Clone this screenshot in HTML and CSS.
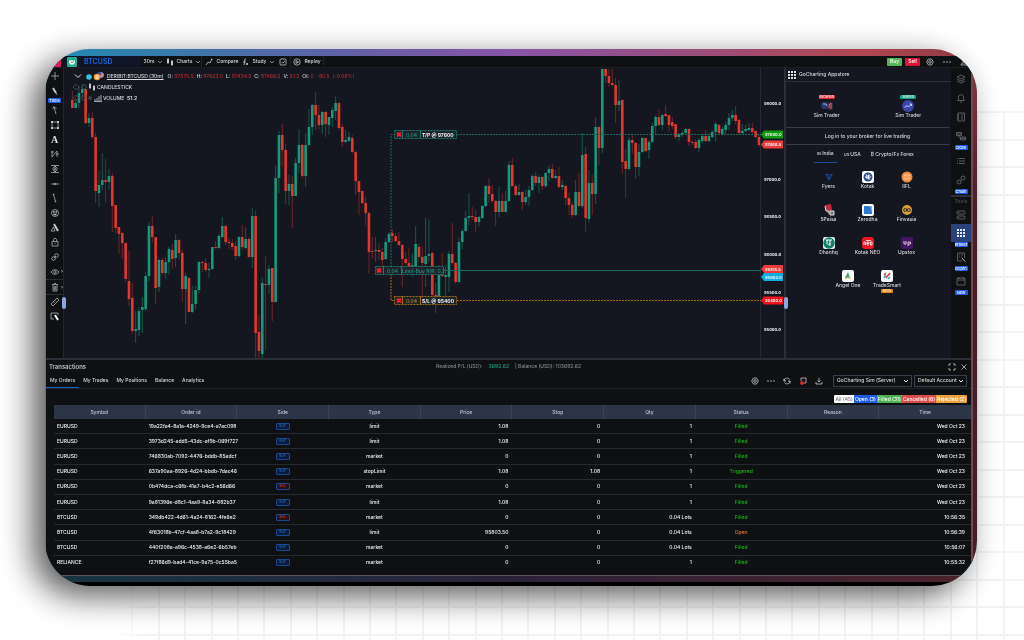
FILE: index.html
```html
<!DOCTYPE html>
<html lang="en">
<head>
<meta charset="utf-8">
<title>GoCharting – BTCUSD</title>
<link rel="stylesheet" href="styles.css">
</head>
<body>
<div class="paper-grid"></div>
<main class="frame">
<div class="app">

<header class="topbar">
  <span class="avatar"></span>
  <div class="symbol-box">
    <svg class="logo" viewBox="0 0 10 10"><rect width="10" height="10" rx="1" fill="#1fae8e"/><path d="M2 3.5h6v2.5L6.5 7.5h-3L2 6z" fill="#fff"/><path d="M4 5l1 1 2-2" stroke="#1fae8e" fill="none"/></svg>
    <button class="symbol">BTCUSD</button>
  </div>
  <button class="tb interval">30m <svg class="chev" viewBox="0 0 6 6"><path d="M1 2l2 2 2-2"/></svg></button>
  <button class="tb charts"><svg class="ic" viewBox="0 0 8 8"><path d="M2 0v6M6 2v6" /><path d="M2 1v4M6 3v4" stroke-width="2"/></svg>Charts <svg class="chev" viewBox="0 0 6 6"><path d="M1 2l2 2 2-2"/></svg></button>
  <button class="tb compare"><svg class="ic" viewBox="0 0 8 8"><path d="M1 7l2-3 2 1 2-4M6 1h1v1"/></svg>Compare</button>
  <button class="tb study"><svg class="ic" viewBox="0 0 8 8"><path d="M4 1H3L2 7M1 4h3M4 5l2 2M6 5L4 7"/></svg>Study <svg class="chev" viewBox="0 0 6 6"><path d="M1 2l2 2 2-2"/></svg></button>
  <button class="tb snap" aria-label="Layout"><svg class="ic" viewBox="0 0 8 8"><rect x="1" y="1" width="6" height="6" rx="1"/><path d="M2.5 4l1.2 1.2L6 3"/></svg></button>
  <button class="tb replay"><svg class="ic" viewBox="0 0 8 8"><circle cx="4" cy="4" r="3.2"/><path d="M3 2.5L5.5 4 3 5.5z"/></svg>Replay</button>
  <div class="topbar-right">
    <button class="trade buy">Buy</button>
    <button class="trade sell">Sell</button>
    <button class="tool" aria-label="Settings"><svg class="ic" viewBox="0 0 8 8"><path d="M2.5 1h3L7.4 4 5.500 7h-3L.6 4z"/><circle cx="4" cy="4" r="1.3"/></svg></button>
    <button class="tool" aria-label="More"><svg class="ic" viewBox="0 0 8 8"><path d="M0 4h2M3 4h2M6 4h2"/></svg></button>
    <button class="tool" aria-label="Account"><svg class="ic" viewBox="0 0 8 8"><circle cx="4" cy="2.500" r="1.500"/><path d="M1 7c0-3 6-3 6 0z"/></svg></button>
  </div>
</header>

<section class="workspace">
  <nav class="tools-left">
    <button class="cross" aria-label="Crosshair"><svg viewBox="0 0 10 10"><path d="M5 1v8M1 5h8"/></svg></button>
    <button aria-label="Pen"><svg viewBox="0 0 10 10"><path d="M3 2l3 5" stroke-width="2"/><path d="M6 7l1 2"/></svg></button>
    <span class="tag">Tools</span>
    <div class="tool-stack">
      <button aria-label="Arrow"><svg viewBox="0 0 10 10"><path d="M6 9L4 2M2.500 4L4 1.500 6.500 4"/></svg></button>
      <button aria-label="Rectangle"><svg viewBox="0 0 10 10"><rect x="2" y="2" width="6" height="6"/><path d="M1 2h2M7 2h2M1 8h2M7 8h2" stroke-width="2"/></svg></button>
      <button class="letter" aria-label="Text">A</button>
      <button aria-label="Patterns"><svg viewBox="0 0 10 10"><path d="M2 2v6l5-6v6M1 3h3M6 5h3"/></svg></button>
      <button aria-label="Fibonacci"><svg viewBox="0 0 10 10"><path d="M1 1.500h8M1 8.500h8M5 2v6M3 4l2-2 2 2M3 6l2 2 2-2M2 5h6"/></svg></button>
      <button aria-label="Horizontal line"><svg viewBox="0 0 10 10"><path d="M1 5h8"/><circle cx="5" cy="5" r=".8"/></svg></button>
      <button aria-label="Trend line"><svg viewBox="0 0 10 10"><path d="M3.500 1.500l2 7"/><circle cx="3.500" cy="1.500" r=".5"/><circle cx="5.500" cy="8.500" r=".5"/></svg></button>
      <button aria-label="Emoji"><svg viewBox="0 0 10 10"><circle cx="5" cy="5" r="3.500"/><path d="M3 4h1.500M5.500 4H7M3.500 6.500h3" stroke-width="1.300"/></svg></button>
      <button aria-label="Shapes"><svg viewBox="0 0 10 10"><path d="M4 1l4 7" stroke-width="2"/><path d="M1 8l2.500-4L5 8z"/></svg></button>
      <button aria-label="Lock"><svg viewBox="0 0 10 10"><path d="M2 4.500h6V9H2zM3.500 4V2.500C3.500 1 6.500 1 6.500 2.500V4M5 6v1"/></svg></button>
      <button aria-label="Link"><svg viewBox="0 0 10 10"><circle cx="3.500" cy="6.500" r="1.800"/><circle cx="6.500" cy="3.500" r="1.800"/><path d="M4 6l2-2"/></svg></button>
      <button class="more" aria-label="Visibility"><svg viewBox="0 0 10 10"><path d="M1 5c2-3 6-3 8 0-2 3-6 3-8 0z"/><circle cx="5" cy="5" r="1.200"/></svg></button>
    </div>
    <button class="lined more" aria-label="Delete"><svg viewBox="0 0 10 10"><path d="M2 2.500h6M3 3v6h4V3M4 1.500h2M4.300 4v4M5.700 4v4"/></svg></button>
    <button aria-label="Measure"><svg viewBox="0 0 10 10"><path d="M1 7l6-6 2 2-6 6zM3.500 5l1 1M5 3.500l1 1"/></svg></button>
    <button aria-label="Object select"><svg viewBox="0 0 10 10"><path d="M4 8H1V2h7v2"/><path d="M5 4l3 5" stroke="#fff" stroke-width="2"/></svg></button>
    <span class="grip"></span>
  </nav>

  <div class="chart">
    <svg class="plot" viewBox="64 68 720 290" role="img" aria-label="BTCUSD 30 minute candles">
      <g id="candles"></g>
      <path d="M760.5 68v290" stroke="#262a33"/>
      <g fill="none">
        <path d="M391 270V134.500h3M457 134.500h304" stroke="#1c6a60" stroke-dasharray="2 1"/>
        <path d="M443 270.500h318" stroke="#1c6a60"/>
        <path d="M391 274v26.500h3M457 300.500h304" stroke="#a06c12" stroke-dasharray="2 1"/>
      </g>
      <g class="order tp"><rect x="394.500" y="130.500" width="62" height="8"/><path d="M402.500 130v9M420.500 130v9"/><path class="x" d="M397 132.500l4 4m0-4l-4 4"/><text x="406" y="136.500">0.04</text><text class="b" x="422" y="136.500">T/P @ 97600</text></g>
      <g class="order lim"><rect x="375.500" y="266.500" width="68" height="8"/><path d="M383.500 266v9M401.500 266v9"/><path class="x" d="M377 268.500l4 4m0-4l-4 4"/><text x="387" y="272.500">0.04</text><text x="402" y="272.500">Limit-Buy R/R: 0.2</text></g>
      <g class="order sl"><rect x="394.500" y="296.500" width="62" height="8"/><path d="M402.500 296v9M420.500 296v9"/><path class="x" d="M397 298.500l4 4m0-4l-4 4"/><text x="406" y="302.500">0.04</text><text class="b" x="422" y="302.500">S/L @ 95400</text></g>
      <g class="axis">
        <text x="764" y="105">98000.0</text><text x="764" y="181">97000.0</text><text x="764" y="218">96500.0</text><text x="764" y="256">96000.0</text><text x="764" y="294">95500.0</text><text x="764" y="331">95000.0</text>
        <path d="M761 134.500l3-4h19v8h-19z" fill="#0d9b10"/><text x="765" y="136">97600.0</text>
        <path d="M761 144.500l3-4h19v8h-19z" fill="#ea3b38"/><text x="765" y="146">97466.5</text>
        <path d="M761 269l3-4h19v8h-19z" fill="#ea3b38"/><text x="765" y="270.500">95815.5</text>
        <path d="M761 277l3-4h19v8h-19z" fill="#10aee0"/><text x="765" y="278.500">95803.5</text>
        <path d="M761 300.500l3-4h19v8h-19z" fill="#f5121a"/><text x="765" y="302">95400.0</text>
      </g>
    </svg>
    <div class="legend">
      <div class="legend-row">
        <svg class="fold" viewBox="0 0 10 10"><path d="M2 3.500l3 3 3-3" stroke="#ddd" fill="none"/></svg>
        <svg class="coins" viewBox="0 0 18 10"><circle cx="3" cy="6" r="2.800" fill="#2fc4dc"/><circle cx="15" cy="4" r="2.800" fill="#c6cbe0"/><path d="M12.500 3h5M12.500 5h5" stroke="#c33f4b"/><path d="M12 1h3v3h-3z" fill="#364a92"/><circle cx="11" cy="6" r="3.300" fill="#f5952a"/><path d="M10 4.500h2v3h-2zM10 6h2" stroke="#fff" fill="none" stroke-width=".7"/></svg>
        <a href="#" class="pair">DERIBIT:BTCUSD (30m)</a>
        <span class="ohlc"><span>O: <b>97570.5</b></span><span>H: <b>97623.0</b></span><span>L: <b>97434.5</b></span><span>C: <b>97466.5</b></span><span>V: <b>51.2</b></span><span>OI: <b>0</b></span><b>-80.5</b><b>(-0.08%)</b></span>
      </div>
      <div class="legend-row">
        <svg class="dim" viewBox="0 0 14 8"><path d="M0 4c2-3 4-3 6 0-2 3-4 3-6 0z"/><circle cx="11" cy="4" r="2.200"/></svg>
        <svg class="ic" viewBox="0 0 8 8"><path d="M2 0v6M6 2v6"/><path d="M2 1v4M6 3v4" stroke-width="2"/></svg>
        <span>CANDLESTICK</span>
      </div>
      <div class="legend-row">
        <svg class="dim wide" viewBox="0 0 20 8"><path d="M0 4c2-3 4-3 6 0-2 3-4 3-6 0z"/><circle cx="11" cy="4" r="2.200"/><path d="M15 5l2-3v4l2-3"/></svg>
        <svg class="ic" viewBox="0 0 8 8"><path d="M1 7V5M3 7V4M5 7V2M7 7V1M0 7.500h8"/></svg>
        <span>VOLUME &nbsp;<b>51.2</b></span>
      </div>
    </div>
  </div>

  <aside class="panel">
    <span class="grip"></span>
    <h2 class="panel-title"><svg viewBox="0 0 8 8"><path d="M0 1h2M3 1h2M6 1h2M0 4h2M3 4h2M6 4h2M0 7h2M3 7h2M6 7h2" stroke="#ddd" stroke-width="2"/></svg>GoCharting Appstore</h2>
    <div class="sims">
      <a href="#" class="sim"><span class="flag red">BROWSER</span><svg viewBox="0 0 12 12"><rect y="2" width="7" height="7" rx="3" fill="#263a6c"/><rect x="6" y="2" width="6" height="8" rx="2" fill="#342a3c"/><path d="M2 4h3l1 2" stroke="#8fb3e6" fill="none"/><path d="M8 8V5l2-2v6" stroke="#e86474" fill="none"/></svg>Sim Trader</a>
      <a href="#" class="sim"><span class="flag teal">SERVER</span><svg viewBox="0 0 12 12"><circle cx="6" cy="6" r="6" fill="#3a46a5"/><path d="M2.500 7.500l2.500-2 1.500 1.500 3-3M7.500 4h2v2" stroke="#c6d2ff" fill="none"/></svg>Sim Trader</a>
    </div>
    <p class="login">Log in to your broker for live trading</p>
    <nav class="regions">
      <button class="on"><small>IN</small> India</button><button><small>US</small> USA</button><button>₿ Crypto/Fx Forex</button>
    </nav>
    <div class="brokers">
      <a href="#"><svg viewBox="0 0 12 12"><path d="M2 3h3l1 1 1-1h3L6 10z" fill="#17448e"/><path d="M4 5h4" stroke="#11161f"/></svg>Fyers</a>
      <a href="#"><svg viewBox="0 0 12 12"><rect width="12" height="12" rx="2" fill="#fff"/><circle cx="6" cy="6" r="4.500" fill="#2a4f94"/><path d="M3 6h6M4 4h1v4M8 4H6.500v4H8" stroke="#fff" fill="none"/></svg>Kotak</a>
      <a href="#"><svg viewBox="0 0 12 12"><circle cx="6" cy="6" r="5.500" fill="#f08a3c"/><circle cx="6" cy="6" r="3.500" fill="#f9b878"/><path d="M6 2v8M2 6h8" stroke="#f08a3c" stroke-width=".6"/></svg>IIFL</a>
      <a href="#"><svg viewBox="0 0 12 12"><path d="M2 1l6-1 1 6-5 3z" fill="#c72441"/><path d="M2 2l1 5h3v3M7 7h4v4H7z" stroke="#ddd" fill="#777"/></svg>5Paisa</a>
      <a href="#"><svg viewBox="0 0 12 12"><rect width="12" height="12" rx="2" fill="#fff"/><path d="M2 2h5c2 0 3 3 3 8H2z" fill="#2f78d4"/><path d="M7 2l3 3V2z" fill="#75a8e8"/></svg>Zerodha</a>
      <a href="#"><svg viewBox="0 0 12 12"><circle cx="6" cy="6" r="5" fill="#dba03c"/><circle cx="4.200" cy="6" r="1.500" fill="none" stroke="#2c2b27"/><circle cx="7.800" cy="6" r="1.500" fill="none" stroke="#2c2b27"/></svg>Finvasia</a>
      <a href="#"><svg viewBox="0 0 12 12"><rect width="12" height="12" rx="2" fill="#e8f3ef"/><circle cx="6" cy="6" r="5.700" fill="#128067"/><path d="M4 3v3c0 2 3 2 3 0M7 3v6M3 3h6" stroke="#fff" fill="none"/></svg>Dhanhq</a>
      <a href="#"><svg viewBox="0 0 12 12"><rect width="12" height="12" rx="3" fill="#ee1721"/><path d="M2 8V5h1.500v3M5 6.500h2V5H5v3h2M8.500 5H10v3H8.500zM4 3.500h5" stroke="#fff" stroke-width=".8" fill="none"/></svg>Kotak NEO</a>
      <a href="#"><svg viewBox="0 0 12 12"><rect width="12" height="12" rx="2" fill="#44165f"/><path d="M3 4v3h2V4M7 9V5h2.500v2H7" stroke="#d9c7e6" fill="none"/></svg>Upstox</a>
    </div>
    <div class="brokers pair-row">
      <a href="#"><svg viewBox="0 0 12 12"><rect width="12" height="12" rx="2" fill="#fff"/><path d="M6 2l2 6H3z" fill="#39a56b"/><path d="M3 9l3-2 3 2" stroke="#ee9c4b" fill="none"/></svg>Angel One</a>
      <a href="#"><svg viewBox="0 0 12 12"><rect width="12" height="12" rx="2" fill="#fff"/><path d="M3 5l2-2M5 8l4-5" stroke="#d83b46" stroke-width="1.500"/><path d="M3 8l2-3M7 9l2-2" stroke="#2fa4c9" stroke-width="1.500"/></svg>TradeSmart<span class="flag orange">BETA</span></a>
    </div>
  </aside>

  <nav class="rail">
    <button aria-label="Layers"><svg viewBox="0 0 10 10"><path d="M1 3l4-2 4 2-4 2zM1 5l4 2 4-2M1 7l4 2 4-2"/></svg></button>
    <button aria-label="Alerts"><svg viewBox="0 0 10 10"><path d="M1.500 7.500h7L7.500 6V4c0-3-5-3-5 0v2zM4 9h2"/></svg></button>
    <button aria-label="Watchlist"><svg viewBox="0 0 10 10"><path d="M2 1h6.500v8H2zM1 3h2M1 5h2M1 7h2M5 3h2M5 5h2M5 7h2"/></svg></button>
    <button aria-label="Order book"><svg viewBox="0 0 10 10"><path d="M.5 1.500h5v3h-5zM.5 3h5M4.500 6h5v3h-5zM4.500 7.500h5M3 5v2"/></svg></button>
    <span class="tag">DOM</span>
    <button aria-label="List"><svg viewBox="0 0 10 10"><path d="M1 2.500h1M3 2.500h6M1 5h1M3 5h6M1 7.500h1M3 7.500h6"/></svg></button>
    <button aria-label="Option chain"><svg viewBox="0 0 10 10"><circle cx="3" cy="7" r="2"/><circle cx="7" cy="3" r="2"/><path d="M4 6l2-2"/></svg></button>
    <span class="tag">Chain</span>
    <span class="rail-label">Tools</span>
    <button aria-label="Panels"><svg viewBox="0 0 10 10"><rect x="1" y="1" width="8" height="3" rx="1"/><rect x="1" y="6" width="8" height="3" rx="1"/><path d="M2.500 2.500h1M2.500 7.500h1"/></svg></button>
    <button class="on" aria-label="Appstore"><svg viewBox="0 0 10 10"><path d="M1 2h2M4 2h2M7 2h2M1 5h2M4 5h2M7 5h2M1 8h2M4 8h2M7 8h2" stroke-width="2"/></svg></button>
    <span class="tag">Broker</span>
    <button aria-label="Reports"><svg viewBox="0 0 10 10"><path d="M6 9H1.500V1h7v5M3 3h1M5 3h2M3 5h1M5 5h1"/><path d="M6 6l3 3.500" stroke="#ccc"/></svg></button>
    <span class="tag">Depth</span>
    <button aria-label="Calendar"><svg viewBox="0 0 10 10"><path d="M1 2h8v7H1zM1 4h8M3 1v2M7 1v2"/></svg></button>
    <span class="tag">New</span>
  </nav>
</section>

<section class="transactions">
  <div class="tx-head">
    <h2>Transactions</h2>
    <p class="pnl"><span>Realized P/L (USD):</span><b>3692.62</b><span>| Balance (USD): 103692.62</span></p>
    <div class="win">
      <button aria-label="Expand"><svg class="ic" viewBox="0 0 8 8"><path d="M1 3V1h2M5 1h2v2M7 5v2H5M3 7H1V5"/></svg></button>
      <button aria-label="Close"><svg class="ic" viewBox="0 0 8 8"><path d="M1.500 1.500l5 5m0-5l-5 5"/></svg></button>
    </div>
  </div>
  <div class="tx-bar">
    <nav class="tx-tabs"><button class="on">My Orders</button><button>My Trades</button><button>My Positions</button><button>Balance</button><button>Analytics</button></nav>
    <div class="tx-tools">
      <button aria-label="Settings"><svg class="ic" viewBox="0 0 8 8"><path d="M2.500 1h3L7.400 4 5.500 7h-3L.6 4z"/><circle cx="4" cy="4" r="1.300"/></svg></button>
      <button aria-label="More"><svg class="ic" viewBox="0 0 8 8"><path d="M0 4h2M3 4h2M6 4h2"/></svg></button>
      <button aria-label="Refresh"><svg class="ic" viewBox="0 0 8 8"><path d="M1 4c0-3 4-4 5.500-1.500M1 1.500V4h2M7 4c0 3-4 4-5.500 1.500M7 6.500V4H5"/></svg></button>
      <button aria-label="Close all"><svg class="ic" viewBox="0 0 8 8"><path d="M2 4V1h5v5H5"/><circle cx="3" cy="6" r="1.500" fill="#e4262d" stroke="#e4262d"/></svg></button>
      <button aria-label="Download"><svg class="ic" viewBox="0 0 8 8"><path d="M4 1v4M2.500 3.500L4 5l1.500-1.500M1 5v2h6V5"/></svg></button>
      <label class="pick server"><select aria-label="Broker"><option>GoCharting Sim (Server)</option></select><svg class="chev" viewBox="0 0 6 6"><path d="M1 2l2 2 2-2"/></svg></label>
      <label class="pick account"><select aria-label="Account"><option>Default Account</option></select><svg class="chev" viewBox="0 0 6 6"><path d="M1 2l2 2 2-2"/></svg></label>
    </div>
  </div>
  <div class="filters"><button class="f-all">All (45)</button><button class="f-open">Open (3)</button><button class="f-filled">Filled (31)</button><button class="f-cancel">Cancelled (6)</button><button class="f-reject">Rejected (2)</button></div>
  <div class="table-wrap">
  <table>
    <thead><tr><th>Symbol</th><th>Order id</th><th>Side</th><th>Type</th><th>Price</th><th>Stop</th><th>Qty</th><th>Status</th><th>Reason</th><th>Time</th></tr></thead>
    <tbody>
      <tr><td>EURUSD</td><td>19a22fa4-8a1a-4249-9ce4-a7ac098</td><td><i class="buy">BUY</i></td><td>limit</td><td>1.08</td><td>0</td><td>1</td><td class="ok">Filled</td><td></td><td>Wed Oct 23</td></tr>
      <tr><td>EURUSD</td><td>3973d245-add5-43dc-af9b-069f727</td><td><i class="buy">BUY</i></td><td>limit</td><td>1.08</td><td>0</td><td>1</td><td class="ok">Filled</td><td></td><td>Wed Oct 23</td></tr>
      <tr><td>EURUSD</td><td>746830ab-7092-4476-bddb-85adcf</td><td><i class="buy">BUY</i></td><td>market</td><td>0</td><td>0</td><td>1</td><td class="ok">Filled</td><td></td><td>Wed Oct 23</td></tr>
      <tr><td>EURUSD</td><td>637a90aa-8926-4d24-bbdb-7dac46</td><td><i class="buy">BUY</i></td><td>stopLimit</td><td>1.08</td><td>1.08</td><td>1</td><td class="ok">Triggered</td><td></td><td>Wed Oct 23</td></tr>
      <tr><td>EURUSD</td><td>0b474dca-c6fb-41a7-b4c2-e56d66</td><td><i class="sell">SELL</i></td><td>market</td><td>0</td><td>0</td><td>1</td><td class="ok">Filled</td><td></td><td>Wed Oct 23</td></tr>
      <tr><td>EURUSD</td><td>9a81396e-d8c1-4aa9-8a34-882b37</td><td><i class="buy">BUY</i></td><td>limit</td><td>1.08</td><td>0</td><td>1</td><td class="ok">Filled</td><td></td><td>Wed Oct 23</td></tr>
      <tr><td>BTCUSD</td><td>349db422-4d61-4a24-8162-4fe6e2</td><td><i class="sell">SELL</i></td><td>market</td><td>0</td><td>0</td><td>0.04 Lots</td><td class="ok">Filled</td><td></td><td>10:56:35</td></tr>
      <tr><td>BTCUSD</td><td>4f63018b-47cf-4aa8-b7a2-9c18429</td><td><i class="buy">BUY</i></td><td>limit</td><td>95803.50</td><td>0</td><td>0.04 Lots</td><td class="open">Open</td><td></td><td>10:56:39</td></tr>
      <tr><td>BTCUSD</td><td>440f208a-a96c-4538-a6e2-6b57eb</td><td><i class="buy">BUY</i></td><td>market</td><td>0</td><td>0</td><td>0.04 Lots</td><td class="ok">Filled</td><td></td><td>10:56:07</td></tr>
      <tr><td>RELIANCE</td><td>f27f86d9-bad4-41ce-9a75-0c55ba5</td><td><i class="buy">BUY</i></td><td>market</td><td>0</td><td>0</td><td>1</td><td class="ok">Filled</td><td></td><td>10:55:32</td></tr>
    </tbody>
  </table>
  </div>
</section>

</div>
</main>
<script src="chart.js"></script>
</body>
</html>
```
FILE: styles.css
```css
* { box-sizing: border-box; }
body {
  margin: 0; min-height: 100vh; display: flex;
  padding: 49px 47px 54px 45px;
  background: #fff; color: #d6d8dc;
  font: 500 5px/7px Inter, "Liberation Sans", sans-serif;
}
button, select { font: inherit; color: inherit; background: none; border: 0; padding: 0; margin: 0; }
button { display: flex; align-items: center; justify-content: center; white-space: nowrap; }
a { color: inherit; text-decoration: none; }
h2, p { margin: 0; font: inherit; }
svg { fill: none; display: block; flex: none; }

.paper-grid {
  position: fixed; inset: 111px 0 0 105px; z-index: -1;
  background:
    repeating-linear-gradient(to right, #f3f3f3 0 2px, transparent 2px 2.873%),
    repeating-linear-gradient(to bottom, #f3f3f3 0 2px, transparent 2px 5.2%);
  -webkit-mask-image: linear-gradient(to right, transparent 14px, #000 40px);
  mask-image: linear-gradient(to right, transparent 14px, #000 40px);
}

.frame {
  flex: 1; min-width: 0; display: flex;
  padding: 7px 4px 10px 1px; border-radius: 45px; overflow: hidden;
  background:
    linear-gradient(#000, #000) bottom / 100% 4px no-repeat,
    linear-gradient(to right, #153640, #2b2238 50%, #4a232b) bottom / 100% 10px no-repeat,
    linear-gradient(to right, #1f8db0, #6060a5 32%, #8a55a8 50%, #984f7f 68%, #b0454f 88%, #8a3a44) top / 100% 7px no-repeat,
    linear-gradient(#8a3a44, #42212a 30%) right / 6px 100% no-repeat,
    #1a93b3;
  box-shadow: -12px 10px 32px rgba(0, 0, 0, .65);
}
.app {
  flex: 1; min-width: 0; display: flex; flex-direction: column;
  background: #0f1012; border-right: 2px solid #7a454c; border-bottom: 1px solid #5e5260;
}

.ic { width: 8px; height: 8px; stroke: #c6c8cc; stroke-width: .8; }
.chev { width: 6px; height: 6px; stroke: #a5a7ab; stroke-width: .8; }

/* top bar */
.topbar { display: flex; height: 12px; border-bottom: 1px solid #1b1e24; flex: none; }
.avatar { width: 15px; background: #d81b60; margin-right: 2px; }
.symbol-box { width: 78px; display: flex; align-items: center; gap: 7px; padding-left: 4px; background: #0f1524; }
.logo { width: 10px; height: 10px; }
.symbol { font-size: 7px; font-weight: 600; color: #1767e0; }
.tb { border-right: 1px solid #202329; gap: 3px; }
.interval { width: 25px; border: 0; }
.charts { width: 36px; }
.compare { width: 39px; border: 0; gap: 4px; }
.study { width: 35px; border: 0; }
.snap { width: 15px; }
.replay { width: 33px; }
.topbar-right { margin-left: auto; display: flex; align-items: center; gap: 3px; }
.trade { width: 15px; height: 8px; border-radius: 1px; color: #fff; }
.trade.buy { background: #57b559; }
.trade.sell { background: #dd1235; }
.tool { width: 14px; }

/* workspace */
.workspace { flex: 1; min-height: 292px; display: flex; border-bottom: 2px solid #2b2f37; }
.grip { position: absolute; width: 4px; height: 12px; top: 229px; border-radius: 2px; background: #8ba7e0; z-index: 2; }
.tag { display: flex; align-items: center; justify-content: center; width: 13px; height: 5px; border-radius: 1px; background: #1f5bea; color: #fff; font-size: 4px; line-height: 5px; }

.tools-left { position: relative; width: 18px; flex: none; border-right: 1px solid #23262d; display: flex; flex-direction: column; align-items: center; }
.tools-left svg { width: 10px; height: 10px; stroke: #c2c4c8; stroke-width: .7; }
.tools-left button { width: 100%; height: 14px; position: relative; }
.tools-left .cross { height: 16px; }
.tool-stack { height: 176px; width: 100%; display: grid; grid-auto-rows: 1fr; align-items: center; }
.tools-left .letter { font: bold 10px/12px "Liberation Serif", serif; color: #ddd; }
.tools-left .lined { border: solid #2b2f37; border-width: 1px 0; height: 16px; }
.more::after { content: "›"; position: absolute; right: 0; }
.tools-left .grip { right: -3px; }

.chart { position: relative; flex: 1; min-width: 0; background: #14171f; }
.plot { position: absolute; width: 100%; height: 100%; }
.plot text { font-size: 5px; fill: #cfd1d5; }
.plot .axis text { font-size: 4px; font-weight: 700; fill: #f0f1f3; }
.order rect { fill: #1d232b; stroke-dasharray: 2 1; }
.order path { stroke-width: 1; }
.plot .order .x { stroke: #f0202c; stroke-width: 2; }
.order .b { font-weight: 700; fill: #eee; }
.tp rect, .tp path, .lim rect, .lim path { stroke: #1b7a6b; }
.plot .tp text:not(.b), .plot .lim text { fill: #209482; }
.sl rect, .sl path { stroke: #a06c12; }
.plot .sl text:not(.b) { fill: #b57d1c; }

.legend { position: absolute; top: 3px; left: 9px; display: flex; flex-direction: column; gap: 1px; }
.legend-row { display: flex; align-items: center; height: 10px; gap: 1px; white-space: nowrap; }
.legend-row .fold { width: 10px; height: 10px; margin-right: 2px; }
.legend-row .coins { width: 18px; height: 10px; }
.pair { text-decoration: underline; margin-left: 2px; }
.ohlc { margin-left: 3px; display: flex; gap: 3px; }
.ohlc b { font-weight: 500; color: #b02a30; }
.dim { width: 14px; height: 8px; stroke: #55585f; stroke-width: .8; }
.dim.wide { width: 20px; }

/* app store panel */
.panel { position: relative; width: 167px; flex: none; border-left: 2px solid #2b2f37; background: #14171f; padding-right: 2px; }
.panel .grip { left: -2px; }
.panel-title { height: 14px; display: flex; align-items: center; gap: 3px; padding-left: 2px; border-bottom: 1px solid #2b2f37; margin-right: -2px; }
.panel-title svg { width: 8px; height: 8px; }
.sims { display: grid; grid-template-columns: 1fr 1fr; padding: 13px 0 8px; height: 46px; border-bottom: 1px solid #3a3d44; }
.sim { display: flex; flex-direction: column; align-items: center; line-height: 6px; }
.sim svg { width: 12px; height: 12px; }
.flag { color: #fff; border-radius: 1px; font-size: 3px; line-height: 4px; height: 4px; width: 16px; text-align: center; }
.sim .flag { margin-bottom: 1px; }
.red { background: #d9252e; }
.teal { background: #10a184; }
.orange { background: #e08a18; width: 12px; }
.login { height: 17px; display: flex; align-items: center; justify-content: center; border-bottom: 1px solid #3a3d44; }
.regions { display: flex; gap: 4px; padding-left: 28px; height: 18px; align-items: stretch; }
.regions button { padding: 0 3px; gap: 1px; }
.regions .on { border-bottom: 1px solid #1c4d96; }
.regions small { font-size: 4px; }
.brokers { display: grid; grid-template-columns: repeat(3, 39px); grid-auto-rows: 33px; justify-content: center; padding-top: 8px; }
.brokers a { display: flex; flex-direction: column; align-items: center; line-height: 7px; white-space: nowrap; }
.brokers svg { width: 12px; height: 12px; }
.pair-row { grid-template-columns: repeat(2, 39px); padding: 0; }

.rail { width: 20px; flex: none; display: flex; flex-direction: column; align-items: center; padding-top: 1px; }
.rail button { width: 100%; height: 19px; }
.rail svg { width: 10px; height: 10px; stroke: #5d6472; stroke-width: .9; }
.rail .on { background: #29427c; }
.rail .on svg { stroke: #e4e8f4; }
.rail .tag { margin-bottom: 1px; }
.rail-label { width: 100%; border-top: 2px solid #2b2f37; text-align: center; color: #4b4f58; line-height: 9px; }
.rail-label ~ button { height: 18px; }

/* transactions */
.transactions { flex: none; height: 215px; }
.tx-head { display: grid; grid-template-columns: 1fr auto 1fr; height: 13px; padding: 0 3px; align-items: center; }
.tx-head h2 { font-size: 6px; }
.pnl { color: #85878c; display: flex; gap: 6px; }
.pnl b { color: #16967c; font-weight: 600; }
.win { display: flex; justify-content: flex-end; gap: 4px; }
.tx-bar { display: flex; justify-content: space-between; height: 16px; border-bottom: 1px solid #20232b; }
.tx-tabs { display: flex; }
.tx-tabs button { padding: 0 4px; }
.tx-tabs .on { border-bottom: 1px solid #1c5fc4; }
.tx-tools { display: flex; align-items: center; gap: 2px; padding-right: 4px; }
.tx-tools button { width: 14px; }
.pick { position: relative; border: 1px solid #39404e; height: 12px; display: flex; }
.pick select { appearance: none; width: 100%; padding: 0 9px 0 3px; }
.pick .chev { position: absolute; right: 2px; top: 2px; stroke: #eee; stroke-width: 1; }
.server { width: 79px; margin-left: 5px; }
.account { width: 53px; }
.filters { display: flex; justify-content: flex-end; padding: 6px 4px 2px 0; height: 16px; }
.filters button { padding: 0 1px; color: #fff; height: 8px; }
.filters .f-all { background: #fff; color: #777; border-radius: 1px 0 0 1px; }
.f-open { background: #1f5bea; }
.f-filled { background: #4caf50; }
.f-cancel { background: #dc4a4c; }
.filters .f-reject { background: #eaa23e; border-radius: 0 1px 1px 0; }
.table-wrap { padding-left: 8px; }
table { width: 100%; height: 164px; table-layout: fixed; border-collapse: separate; border-spacing: 0; color: #f0f1f3; }
th { height: 14px; padding: 0; font-weight: 500; background: #2c3545; border-right: 1px solid #3a4352; color: #c3c7ce; }
th:last-child { border: 0; }
td { padding: 0 4px 0 3px; border-bottom: 1px solid #242932; text-align: right; white-space: nowrap; }
tr:last-child td { border: 0; }
td:nth-child(1), td:nth-child(2) { text-align: left; }
td:nth-child(2) { padding-right: 0; }
td:nth-child(3), td:nth-child(4), td:nth-child(8) { text-align: center; }
td:last-child { padding-right: 6px; }
td i { display: block; width: 14px; height: 7px; margin: 0 auto; border: 1px solid #174a94; border-radius: 1px; font-style: normal; font-size: 3px; line-height: 5px; }
td .buy { color: #2a74e8; background: #0c1b38; }
td .sell { color: #e8363c; background: #281216; }
.ok { color: #12b812; }
.open { color: #e8762a; }
```
FILE: chart.js
```js
// One entry per candle: direction, wick top, body top, body bottom, wick bottom.
const series = `
r91,100,108,108 g98,103,108,108 g86,93,103,108 g84,89,93,97 r89,89,123,124 g113,118,123,127 r112,118,137,139 r133,137,191,203 g171,185,193,207 g153,180,185,190
r159,180,182,203 g169,176,182,190 r173,176,206,232 r205,205,228,233 r227,227,234,254 r232,233,243,259 r243,243,279,282 r251,281,299,306 r283,298,331,334 g311,329,331,343
g307,311,330,336 g297,307,310,333 g272,276,309,311 g222,226,276,281 r216,226,237,243 r237,237,288,304 g259,260,287,292 r258,260,273,275 g257,262,273,279 g247,249,262,275
r244,250,259,269 g234,240,258,267 r239,240,253,259 r250,253,289,302 g273,276,289,324 r277,278,312,312 g286,304,312,313 g286,290,304,310 g261,262,290,293 r261,262,263,272
r258,263,270,272 g263,269,270,278 g247,247,269,270 r241,247,248,249 g234,236,248,249 g217,226,237,238 r225,226,242,245 r238,242,243,249 r239,243,247,250 r241,246,256,260
g236,237,256,258 r225,237,247,250 g227,239,248,249 r237,239,257,258 g208,216,257,268 r210,216,333,358 r315,332,351,358 g278,283,354,358 r256,284,285,350 g265,269,285,294
r268,268,302,321 g166,178,302,303 g131,135,178,193 r124,135,150,167 r144,150,191,204 g175,184,191,205 r176,184,196,228 g158,163,196,196 g129,145,163,173 r144,145,176,178
g133,145,176,187 g109,127,145,146 g104,105,127,135 r92,105,115,130 r105,115,125,129 g111,112,125,134 r111,112,124,137 g117,117,125,135 g107,110,118,127 g96,103,111,120
r102,103,128,130 r124,127,142,147 g130,140,142,143 g132,137,141,142 r135,138,152,153 r151,152,181,195 r181,181,192,215 r191,191,203,204 r197,203,213,225 r212,213,252,274
r237,251,252,259 g237,250,251,262 r243,250,252,260 r248,252,260,267 g238,242,259,260 g232,234,242,243 r229,233,236,242 r233,236,241,242 r232,241,245,246 r244,245,259,287
r252,259,263,265 r248,263,267,268 g253,265,267,277 g226,244,267,270 r244,247,257,262 r246,257,263,297 g218,256,264,287 g219,254,256,262 r252,253,295,297 r283,295,297,313
g265,275,297,298 r253,274,276,277 g265,275,277,297 g251,254,277,292 r223,254,263,265 r262,263,282,284 g237,242,282,283 g229,231,242,249 g211,218,231,232 g193,216,218,225
r207,216,217,220 r210,217,222,232 g216,217,222,227 g205,206,218,219 g185,186,206,207 r178,186,194,203 r185,194,201,203 r200,201,212,226 g187,201,212,217 r193,201,212,212
g191,201,212,212 g161,165,201,202 r158,165,186,187 r184,186,195,196 g184,192,195,196 r191,192,202,210 g190,197,202,205 g186,190,197,206 g174,176,190,191 r172,176,183,186
g175,177,183,193 r176,177,186,190 g172,173,186,188 g165,169,173,181 r164,169,178,179 g170,176,178,179 r167,176,187,188 g180,185,187,190 r185,186,198,205 r193,198,205,215
r202,205,215,218 g180,192,215,216 r173,192,206,207 g133,155,206,208 r147,154,218,232 g170,183,219,223 r175,183,194,215 g118,127,194,204 r126,127,148,165 g69,69,148,153
r69,69,76,83 r69,76,83,87 r69,83,85,86 r78,85,105,123 g80,101,105,111 r99,100,162,174 r149,161,169,198 g137,140,169,170 r135,140,143,154 r142,143,167,179
g144,152,167,176 g137,138,152,153 r138,138,151,152 g140,142,150,159 g123,126,142,143 g115,117,126,134 r109,117,125,126 g114,115,125,130 r105,114,116,117 r115,115,125,132
r117,122,126,129 r124,124,137,139 g133,134,137,141 g131,133,135,137 g128,129,133,134 r128,129,142,146 r140,142,143,145 r139,142,148,149 g138,140,148,152 g134,136,141,143
r130,136,141,142 g133,136,141,142 g130,132,137,138 g122,124,132,142 r124,125,133,134 g127,129,134,135 g122,125,130,134 g113,118,125,130 g110,115,118,121 r106,115,121,124
r119,120,133,134 g124,131,133,134 g125,129,131,132 g123,128,130,131 r123,128,132,135 r130,131,137,138 r134,137,145,147`;

const NS = "http://www.w3.org/2000/svg";
const layer = document.getElementById("candles");

function bar(x, top, width, bottom, fill) {
  const r = document.createElementNS(NS, "rect");
  r.setAttribute("x", x - width / 2);
  r.setAttribute("y", top);
  r.setAttribute("width", width);
  r.setAttribute("height", Math.max(1, bottom - top));
  r.setAttribute("fill", fill);
  layer.appendChild(r);
}

series.trim().split(/\s+/).forEach((entry, i) => {
  const up = entry[0] === "g";
  const [high, top, bottom, low] = entry.slice(1).split(",").map(Number);
  const x = 72.3 + i * 10 / 3;
  bar(x, high, 1, low, up ? "#17574b" : "#6e2528");
  bar(x, top, 2.6, bottom, up ? "#149a7c" : "#e2362f");
});
```
